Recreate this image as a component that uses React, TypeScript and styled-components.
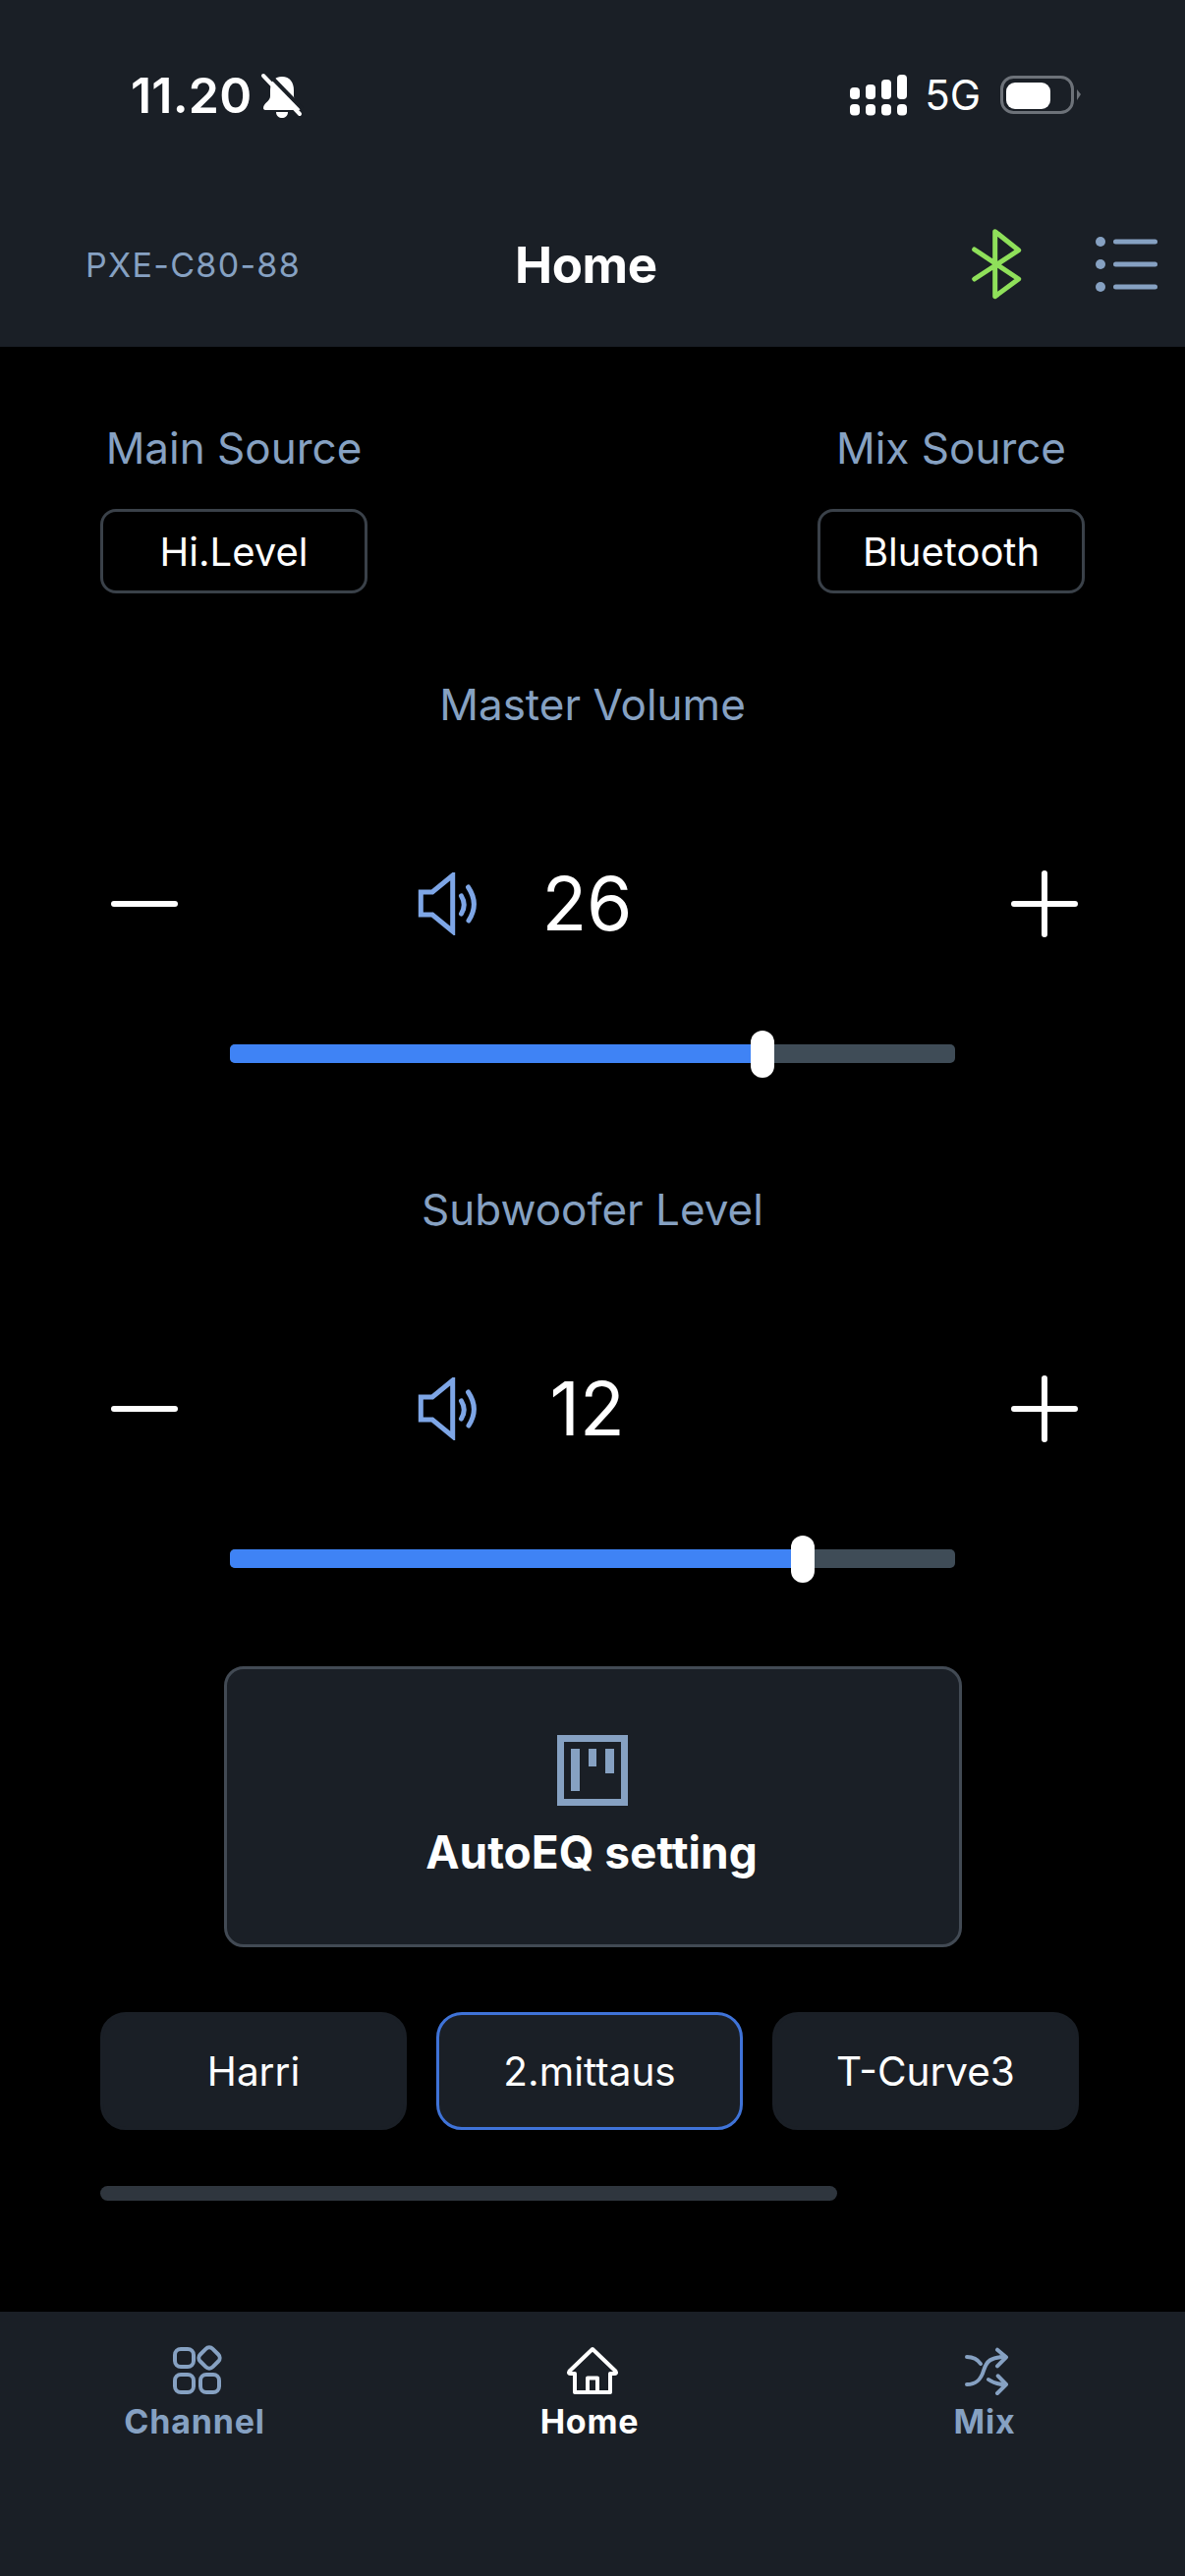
import React from "react";
import styled, { createGlobalStyle } from "styled-components";

const Global = createGlobalStyle`
  html, body { margin: 0; padding: 0; background: #000; }
  body { font-family: Inter, "Liberation Sans", sans-serif; -webkit-font-smoothing: antialiased; }
  * { box-sizing: border-box; }
`;

const panel = "#1a1f26";
const muted = "#86a1c2";

const Page = styled.div`
  width: 1206px;
  height: 2622px;
  background: #000;
  display: flex;
  flex-direction: column;
  overflow: hidden;
`;
const Header = styled.header`
  height: 353px;
  flex: none;
  background: ${panel};
  padding-top: 72px;
`;
const StatusBar = styled.div`
  height: 50px;
  display: flex;
  align-items: center;
  padding: 0 106px 0 133px;
  color: #fff;
`;
const Clock = styled.span`
  font-size: 50px;
  font-weight: 600;
  line-height: 50px;
  letter-spacing: 0.2px;
`;
const BellIcon = styled.svg`
  width: 44px;
  height: 46px;
  margin-left: 9px;
`;
const StatusRight = styled.div`
  margin-left: auto;
  display: flex;
  align-items: center;
`;
const Network = styled.span`
  font-size: 42px;
  font-weight: 400;
  line-height: 50px;
  margin: 0 20px 0 18px;
`;
const TitleRow = styled.div`
  height: 80px;
  margin-top: 107px;
  display: grid;
  grid-template-columns: 437px 462px 126px 1fr;
  align-items: center;
  padding-left: 87px;
`;
const Device = styled.span`
  font-size: 34px;
  color: ${muted};
  letter-spacing: 1.3px;
  white-space: nowrap;
`;
const Title = styled.h1`
  margin: 0;
  font-size: 51px;
  font-weight: 700;
  color: #fff;
  white-space: nowrap;
  letter-spacing: -0.4px;
`;
const Main = styled.main`
  flex: 1;
  padding-top: 78px;
`;
const Sources = styled.div`
  display: flex;
  justify-content: space-between;
  padding: 0 102px;
`;
const SourceBlock = styled.div`
  width: 272px;
  display: flex;
  flex-direction: column;
  align-items: center;
  gap: 37px;
`;
const Label = styled.div`
  font-size: 44px;
  line-height: 50px;
  color: ${muted};
  text-align: center;
  white-space: nowrap;
`;
const SourceButton = styled.button`
  width: 272px;
  height: 86px;
  border: 3px solid #3a4149;
  border-radius: 16px;
  background: #000;
  color: #fff;
  font: 400 40px Inter, sans-serif;
`;
const Control = styled.section`
  margin-top: 88px;
  & + & { margin-top: 124px; }
`;
const Stepper = styled.div`
  height: 72px;
  margin-top: 142px;
  display: flex;
  align-items: center;
  padding: 0 109px 0 113px;
`;
const StepGlyph = styled.svg`
  width: 68px;
  height: 68px;
  flex: none;
`;
const Speaker = styled.svg`
  width: 62px;
  height: 64px;
  flex: none;
  margin-left: 244px;
`;
const Value = styled.span`
  width: 115px;
  margin-left: 53px;
  margin-right: auto;
  text-align: center;
  color: #fff;
  font-size: 75px;
  line-height: 72px;
  font-weight: 380;
`;
const SliderTrack = styled.div`
  position: relative;
  height: 19px;
  margin: 107px 234px 0;
  background: #3f4c57;
  border-radius: 5px;
`;
const SliderFill = styled.div`
  height: 100%;
  background: #3f83f5;
  border-radius: 5px 0 0 5px;
`;
const SliderThumb = styled.div`
  position: absolute;
  top: -14.5px;
  width: 24px;
  height: 48px;
  margin-left: -12px;
  background: #fff;
  border-radius: 12px;
`;
const AutoEq = styled.button`
  display: flex;
  flex-direction: column;
  align-items: center;
  width: 751px;
  height: 286px;
  margin: 100px auto 0;
  padding: 67px 0 0;
  background: ${panel};
  border: 3px solid #424a54;
  border-radius: 20px;
  color: #fff;
`;
const AutoEqIcon = styled.svg`
  width: 72px;
  height: 72px;
`;
const AutoEqLabel = styled.span`
  margin-top: 19px;
  margin-right: 2px;
  font: 700 46px/56px Inter, sans-serif;
`;
const Presets = styled.div`
  display: flex;
  gap: 30px;
  margin: 66px 102px 0;
`;
const Preset = styled.button<{ $active?: boolean }>`
  width: 312px;
  height: 120px;
  background: ${panel};
  border: 3px solid ${(p) => (p.$active ? "#3f73d8" : panel)};
  border-radius: 26px;
  color: #fff;
  font: 400 40.5px Inter, sans-serif;
`;
const ScrollBar = styled.div`
  width: 750px;
  height: 15px;
  margin: 57px 0 0 102px;
  background: #2f363e;
  border-radius: 8px;
`;
const Nav = styled.nav`
  height: 269px;
  flex: none;
  background: ${panel};
  display: grid;
  grid-template-columns: 396px 408px 396px;
  padding-top: 32px;
`;
const NavItem = styled.div<{ $active?: boolean }>`
  display: flex;
  flex-direction: column;
  align-items: center;
  gap: 4px;
  color: ${(p) => (p.$active ? "#fff" : muted)};
`;
const NavIcon = styled.svg`
  width: 62px;
  height: 56px;
`;
const NavLabel = styled.span`
  font-size: 34px;
  line-height: 40px;
  font-weight: 700;
  letter-spacing: 0.8px;
`;

const Signal = () => (
  <svg width="58" height="42" viewBox="0 0 58 42" fill="#fff">
    <rect x="0" y="13" width="10" height="12" rx="4" />
    <rect x="16" y="10" width="10" height="15" rx="4" />
    <rect x="32" y="5" width="10" height="20" rx="4" />
    <rect x="48" y="0" width="10" height="25" rx="4" />
    <rect x="0" y="30" width="10" height="11.5" rx="4" />
    <rect x="16" y="30" width="10" height="11.5" rx="4" />
    <rect x="32" y="30" width="10" height="11.5" rx="4" />
    <rect x="48" y="30" width="10" height="11.5" rx="4" />
  </svg>
);
const Battery = () => (
  <svg width="82" height="40" viewBox="0 0 82 40">
    <rect x="1.5" y="1.5" width="72" height="36" rx="12" fill="none" stroke="#6d7279" strokeWidth="3" />
    <rect x="6" y="7" width="45" height="27" rx="9" fill="#fff" />
    <path d="M78 14 L82 19 L78 25 Z" fill="#6d7279" />
  </svg>
);
const Bell = () => (
  <BellIcon viewBox="0 0 44 46">
    <path fill="#fff" d="M22 4c-8 0-12 6-12 14v6c0 5-7 7-7 12q0 2 3 2h32q3 0 3-2c0-5-7-7-7-12v-6c0-8-4-14-12-14z" />
    <path fill="#fff" d="M16 40h12c0 4-3 6-6 6s-6-2-6-6z" />
    <path d="M6 -1 L44 38" stroke={panel} strokeWidth="4" />
    <path d="M3 3 L40 42" stroke="#fff" strokeWidth="4" strokeLinecap="round" />
  </BellIcon>
);
const Bluetooth = () => (
  <svg width="56" height="80" viewBox="0 0 56 80" fill="none" stroke="#8fe05a" strokeWidth="5" strokeLinecap="round" strokeLinejoin="round">
    <path d="M5.7 25 L50.7 55 L26.7 72.7 V6.7 L50.7 25.7 L5.7 55" />
  </svg>
);
const ListIcon = () => (
  <svg width="70" height="60" viewBox="0 0 70 60" fill={muted} stroke="none">
    <circle cx="8" cy="7" r="5" />
    <circle cx="8" cy="30" r="5" />
    <circle cx="8" cy="53" r="5" />
    <path d="M23.5 7H63.5M23.5 30H63.5M23.5 53H63.5" stroke={muted} strokeWidth="5" strokeLinecap="round" />
  </svg>
);
const Minus = () => (
  <StepGlyph viewBox="0 0 68 68">
    <path d="M3 34H65" stroke="#fff" strokeWidth="6" strokeLinecap="round" />
  </StepGlyph>
);
const Plus = () => (
  <StepGlyph viewBox="0 0 68 68">
    <path d="M3 34H65M34 3V65" stroke="#fff" strokeWidth="6" strokeLinecap="round" />
  </StepGlyph>
);
const SpeakerIcon = () => (
  <Speaker viewBox="0 0 62 64" fill="none" stroke="#7ea6e6" strokeWidth="5" strokeLinecap="round">
    <path d="M3.3 20H15L35.7 3V60L15 43H3.3Z" strokeLinejoin="miter" strokeLinecap="butt" />
    <path d="M44.5 24Q50 33 44.5 42" />
    <path d="M51.5 15Q63 32 52 49" />
  </Speaker>
);

const VolumeControl = ({ label, value, percent }: { label: string; value: number; percent: number }) => (
  <Control>
    <Label>{label}</Label>
    <Stepper>
      <Minus />
      <SpeakerIcon />
      <Value>{value}</Value>
      <Plus />
    </Stepper>
    <SliderTrack>
      <SliderFill style={{ width: `${percent}%` }} />
      <SliderThumb style={{ left: `${percent}%` }} />
    </SliderTrack>
  </Control>
);

export default function App() {
  return (
    <Page>
      <Global />
      <Header>
        <StatusBar>
          <Clock>11.20</Clock>
          <Bell />
          <StatusRight>
            <Signal />
            <Network>5G</Network>
            <Battery />
          </StatusRight>
        </StatusBar>
        <TitleRow>
          <Device>PXE-C80-88</Device>
          <Title>Home</Title>
          <Bluetooth />
          <ListIcon />
        </TitleRow>
      </Header>
      <Main>
        <Sources>
          <SourceBlock>
            <Label>Main Source</Label>
            <SourceButton>Hi.Level</SourceButton>
          </SourceBlock>
          <SourceBlock>
            <Label>Mix Source</Label>
            <SourceButton>Bluetooth</SourceButton>
          </SourceBlock>
        </Sources>
        <VolumeControl label="Master Volume" value={26} percent={73.4} />
        <VolumeControl label="Subwoofer Level" value={12} percent={79} />
        <AutoEq>
          <AutoEqIcon viewBox="0 0 72 72">
            <rect x="3.5" y="3.5" width="65" height="65" fill="none" stroke={muted} strokeWidth="7" />
            <rect x="14" y="14" width="9" height="43" fill={muted} />
            <rect x="32" y="14" width="8" height="18" fill={muted} />
            <rect x="49" y="14" width="9" height="25" fill={muted} />
          </AutoEqIcon>
          <AutoEqLabel>AutoEQ setting</AutoEqLabel>
        </AutoEq>
        <Presets>
          <Preset>Harri</Preset>
          <Preset $active>2.mittaus</Preset>
          <Preset>T-Curve3</Preset>
        </Presets>
        <ScrollBar />
      </Main>
      <Nav>
        <NavItem>
          <NavIcon viewBox="0 0 62 56" fill="none" stroke="currentColor" strokeWidth="4">
            <g transform="translate(3 0)">
              <rect x="8" y="6" width="19" height="18" rx="6" />
              <rect x="34" y="6" width="18" height="18" rx="5" transform="rotate(45 43 15)" />
              <rect x="8" y="32" width="19" height="18" rx="6" />
              <rect x="34" y="32" width="19" height="18" rx="6" />
            </g>
          </NavIcon>
          <NavLabel>Channel</NavLabel>
        </NavItem>
        <NavItem $active>
          <NavIcon viewBox="0 0 62 56" fill="none" stroke="currentColor" strokeWidth="4" strokeLinejoin="round">
            <g transform="translate(6 0)">
              <path d="M28 6L4.5 28.5Q3 31 6 31H10V50H46V31H50Q53 31 51.5 28.5Z" />
              <path d="M23 50V35.5H33V50" />
            </g>
          </NavIcon>
          <NavLabel>Home</NavLabel>
        </NavItem>
        <NavItem>
          <NavIcon viewBox="0 0 62 56" fill="none" stroke="currentColor" strokeWidth="4" strokeLinecap="round" strokeLinejoin="round">
            <g transform="translate(8 0)">
              <path d="M5 14C10 14 15 15 19 21" />
              <path d="M5 42C14 42 19 38 22 28C25 18 30 14 43 14" />
              <path d="M27 37C31 40 36 42 44 42" />
              <path d="M36 6.7L45 14.3L36 23.3" />
              <path d="M36.7 33.3L45 42L36 51" />
            </g>
          </NavIcon>
          <NavLabel>Mix</NavLabel>
        </NavItem>
      </Nav>
    </Page>
  );
}
